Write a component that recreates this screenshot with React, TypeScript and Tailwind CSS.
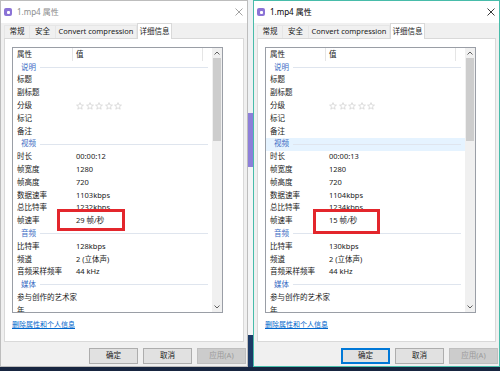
import React from 'react';

type Row = { k: string; v?: string; group?: boolean; stars?: boolean };

const leftValues: Record<string, string> = {
  时长: '00:00:12',
  帧宽度: '1280',
  帧高度: '720',
  数据速率: '1103kbps',
  总比特率: '1232kbps',
  帧速率: '29 帧/秒',
  比特率: '128kbps',
  频道: '2 (立体声)',
  音频采样频率: '44 kHz',
};

const rightValues: Record<string, string> = {
  时长: '00:00:13',
  帧宽度: '1280',
  帧高度: '720',
  数据速率: '1104kbps',
  总比特率: '1234kbps',
  帧速率: '15 帧/秒',
  比特率: '130kbps',
  频道: '2 (立体声)',
  音频采样频率: '44 kHz',
};

const rows: Row[] = [
  { k: '说明', group: true },
  { k: '标题' },
  { k: '副标题' },
  { k: '分级', stars: true },
  { k: '标记' },
  { k: '备注' },
  { k: '视频', group: true },
  { k: '时长' },
  { k: '帧宽度' },
  { k: '帧高度' },
  { k: '数据速率' },
  { k: '总比特率' },
  { k: '帧速率' },
  { k: '音频', group: true },
  { k: '比特率' },
  { k: '频道' },
  { k: '音频采样频率' },
  { k: '媒体', group: true },
  { k: '参与创作的艺术家' },
  { k: '年' },
];

function Star() {
  return (
    <svg width="8" height="8" viewBox="0 0 10 10">
      <path
        d="M5 0.8 L6.2 3.7 L9.3 3.9 L6.9 5.9 L7.7 9 L5 7.3 L2.3 9 L3.1 5.9 L0.7 3.9 L3.8 3.7 Z"
        fill="none"
        stroke="#c9c9c9"
        strokeWidth="0.8"
      />
    </svg>
  );
}

function ListBox({ values, highlight }: { values: Record<string, string>; highlight?: string }) {
  return (
    <div className="relative flex h-[266px] w-[211px] overflow-hidden border border-[#9a9ea6] bg-white">
      <div className="flex w-[199px] flex-col">
        {/* column header */}
        <div className="flex h-[13px] shrink-0 items-center">
          <div className="flex h-full w-[60px] items-center border-r border-[#e5e5e5] pl-[4px]">属性</div>
          <div className="flex h-full w-[130px] items-center border-r border-[#e5e5e5] pl-[3px]">值</div>
        </div>
        {rows.map((r) =>
          r.group ? (
            <div
              key={r.k}
              className={`flex h-[12.8px] shrink-0 items-center pl-[8px] pr-[4px] ${
                highlight === r.k ? 'bg-[#e5f3ff]' : ''
              }`}
            >
              <span className="text-[#3b6cc4]">{r.k}</span>
              <div className="ml-[4px] h-px flex-1 bg-[#dfe5ee]" />
            </div>
          ) : (
            <div key={r.k} className="flex h-[12.8px] shrink-0 items-center whitespace-nowrap">
              <div className="w-[63px] shrink-0 overflow-visible pl-[4px]">{r.k}</div>
              {r.stars ? (
                <div className="flex gap-[1.5px]">
                  <Star />
                  <Star />
                  <Star />
                  <Star />
                  <Star />
                </div>
              ) : (
                <div>{values[r.k] ?? ''}</div>
              )}
            </div>
          )
        )}
      </div>
      {/* scrollbar */}
      <div className="flex w-[10px] flex-col bg-[#f0f0f0]">
        <div className="flex h-[10px] items-center justify-center">
          <svg width="6" height="4" viewBox="0 0 6 4">
            <path d="M0.5 3.5 L3 1 L5.5 3.5" fill="none" stroke="#606060" strokeWidth="1" />
          </svg>
        </div>
        <div className="mx-px h-[83px] bg-[#cdcdcd]" />
        <div className="flex-1" />
        <div className="flex h-[10px] items-center justify-center">
          <svg width="6" height="4" viewBox="0 0 6 4">
            <path d="M0.5 0.5 L3 3 L5.5 0.5" fill="none" stroke="#606060" strokeWidth="1" />
          </svg>
        </div>
      </div>
    </div>
  );
}

function Dialog({
  active,
  values,
  highlight,
  box,
}: {
  active: boolean;
  values: Record<string, string>;
  highlight?: string;
  box: { left: number; top: number; w: number; h: number };
}) {
  return (
    <div
      className={`relative flex h-full flex-col border bg-[#f0f0f0] ${
        active ? 'border-[#48bcaa]' : 'border-[#bdbdbd]'
      }`}
    >
      {/* title bar */}
      <div className="flex h-[22px] shrink-0 items-center bg-white pl-[3px] pr-[4px]">
        <div className="flex h-[8px] w-[8px] items-center justify-center rounded-[2px] bg-[#8b73d6]">
          <div className="h-[3px] w-[3px] rounded-[1px] bg-white" />
        </div>
        <span className={`ml-[5px] text-[8px] ${active ? 'text-black' : 'text-[#8c8c8c]'}`}>1.mp4 属性</span>
        <svg className="ml-auto" width="8" height="8" viewBox="0 0 8 8">
          <path d="M0.5 0.5 L7.5 7.5 M7.5 0.5 L0.5 7.5" stroke={active ? '#222' : '#9a9a9a'} strokeWidth="0.9" />
        </svg>
      </div>
      {/* tabs */}
      <div className="flex h-[15px] shrink-0 items-end pl-[3px]">
        <div className="flex h-[13px] w-[26px] items-center justify-center border border-b-0 border-[#e6e6e6] bg-[#f0f0f0]">常规</div>
        <div className="flex h-[13px] w-[26px] items-center justify-center border border-b-0 border-l-0 border-[#e6e6e6] bg-[#f0f0f0]">安全</div>
        <div className="flex h-[13px] w-[81px] items-center justify-center border border-b-0 border-l-0 border-[#e6e6e6] bg-[#f0f0f0]">Convert compression</div>
        <div className="relative z-10 -mb-px flex h-[16px] w-[35px] items-center justify-center border border-b-0 border-[#d9d9d9] bg-white">详细信息</div>
      </div>
      {/* tab panel */}
      <div className="mx-[3px] flex h-[304px] shrink-0 flex-col border border-[#d9d9d9] bg-white pl-[7px] pt-[8px]">
        <ListBox values={values} highlight={highlight} />
        <div className="mt-[8px] text-[7px] text-[#0066cc] underline">删除属性和个人信息</div>
      </div>
      {/* buttons */}
      <div className="mt-[6px] flex justify-end gap-[5px] pr-[1px]">
        <div
          className={`flex h-[16px] w-[49px] items-center justify-center bg-[#e1e1e1] ${
            active ? 'border-2 border-[#0078d7]' : 'border border-[#adadad]'
          }`}
        >
          确定
        </div>
        <div className="flex h-[16px] w-[49px] items-center justify-center border border-[#adadad] bg-[#e1e1e1]">取消</div>
        <div className="flex h-[16px] w-[49px] items-center justify-center border border-[#bfbfbf] bg-[#cccccc] text-[#9a9a9a]">应用(A)</div>
      </div>
      {/* red annotation box */}
      <div
        className="absolute z-20 border-[3px] border-[#e3262c]"
        style={{ left: box.left, top: box.top, width: box.w, height: box.h }}
      />
    </div>
  );
}

export default function App() {
  return (
    <div
      className="flex h-[371px] w-[500px] flex-col overflow-hidden bg-[#1a2640] text-[7.5px] leading-none text-[#1a1a1a]"
      style={{ fontFamily: '"Noto Sans", "Noto Sans CJK SC", sans-serif' }}
    >
      <div className="flex h-[367px]">
        <div className="w-[248px]">
          <Dialog active={false} values={leftValues} box={{ left: 56, top: 208, w: 68, h: 22 }} />
        </div>
        {/* background strip between windows */}
        <div className="flex w-[5px] flex-col">
          <div className="h-[113px] bg-[#eef1f3]" />
          <div className="h-[54px] bg-[#8d7fd9]" />
          <div className="h-[168px] bg-[#f4f5f6]" />
          <div className="flex-1 bg-[#1d3a66]" />
        </div>
        <div className="w-[247px]">
          <Dialog active values={rightValues} highlight="视频" box={{ left: 59, top: 208, w: 67, h: 25 }} />
        </div>
      </div>
      <div className="flex-1 bg-[#172540]" />
    </div>
  );
}
